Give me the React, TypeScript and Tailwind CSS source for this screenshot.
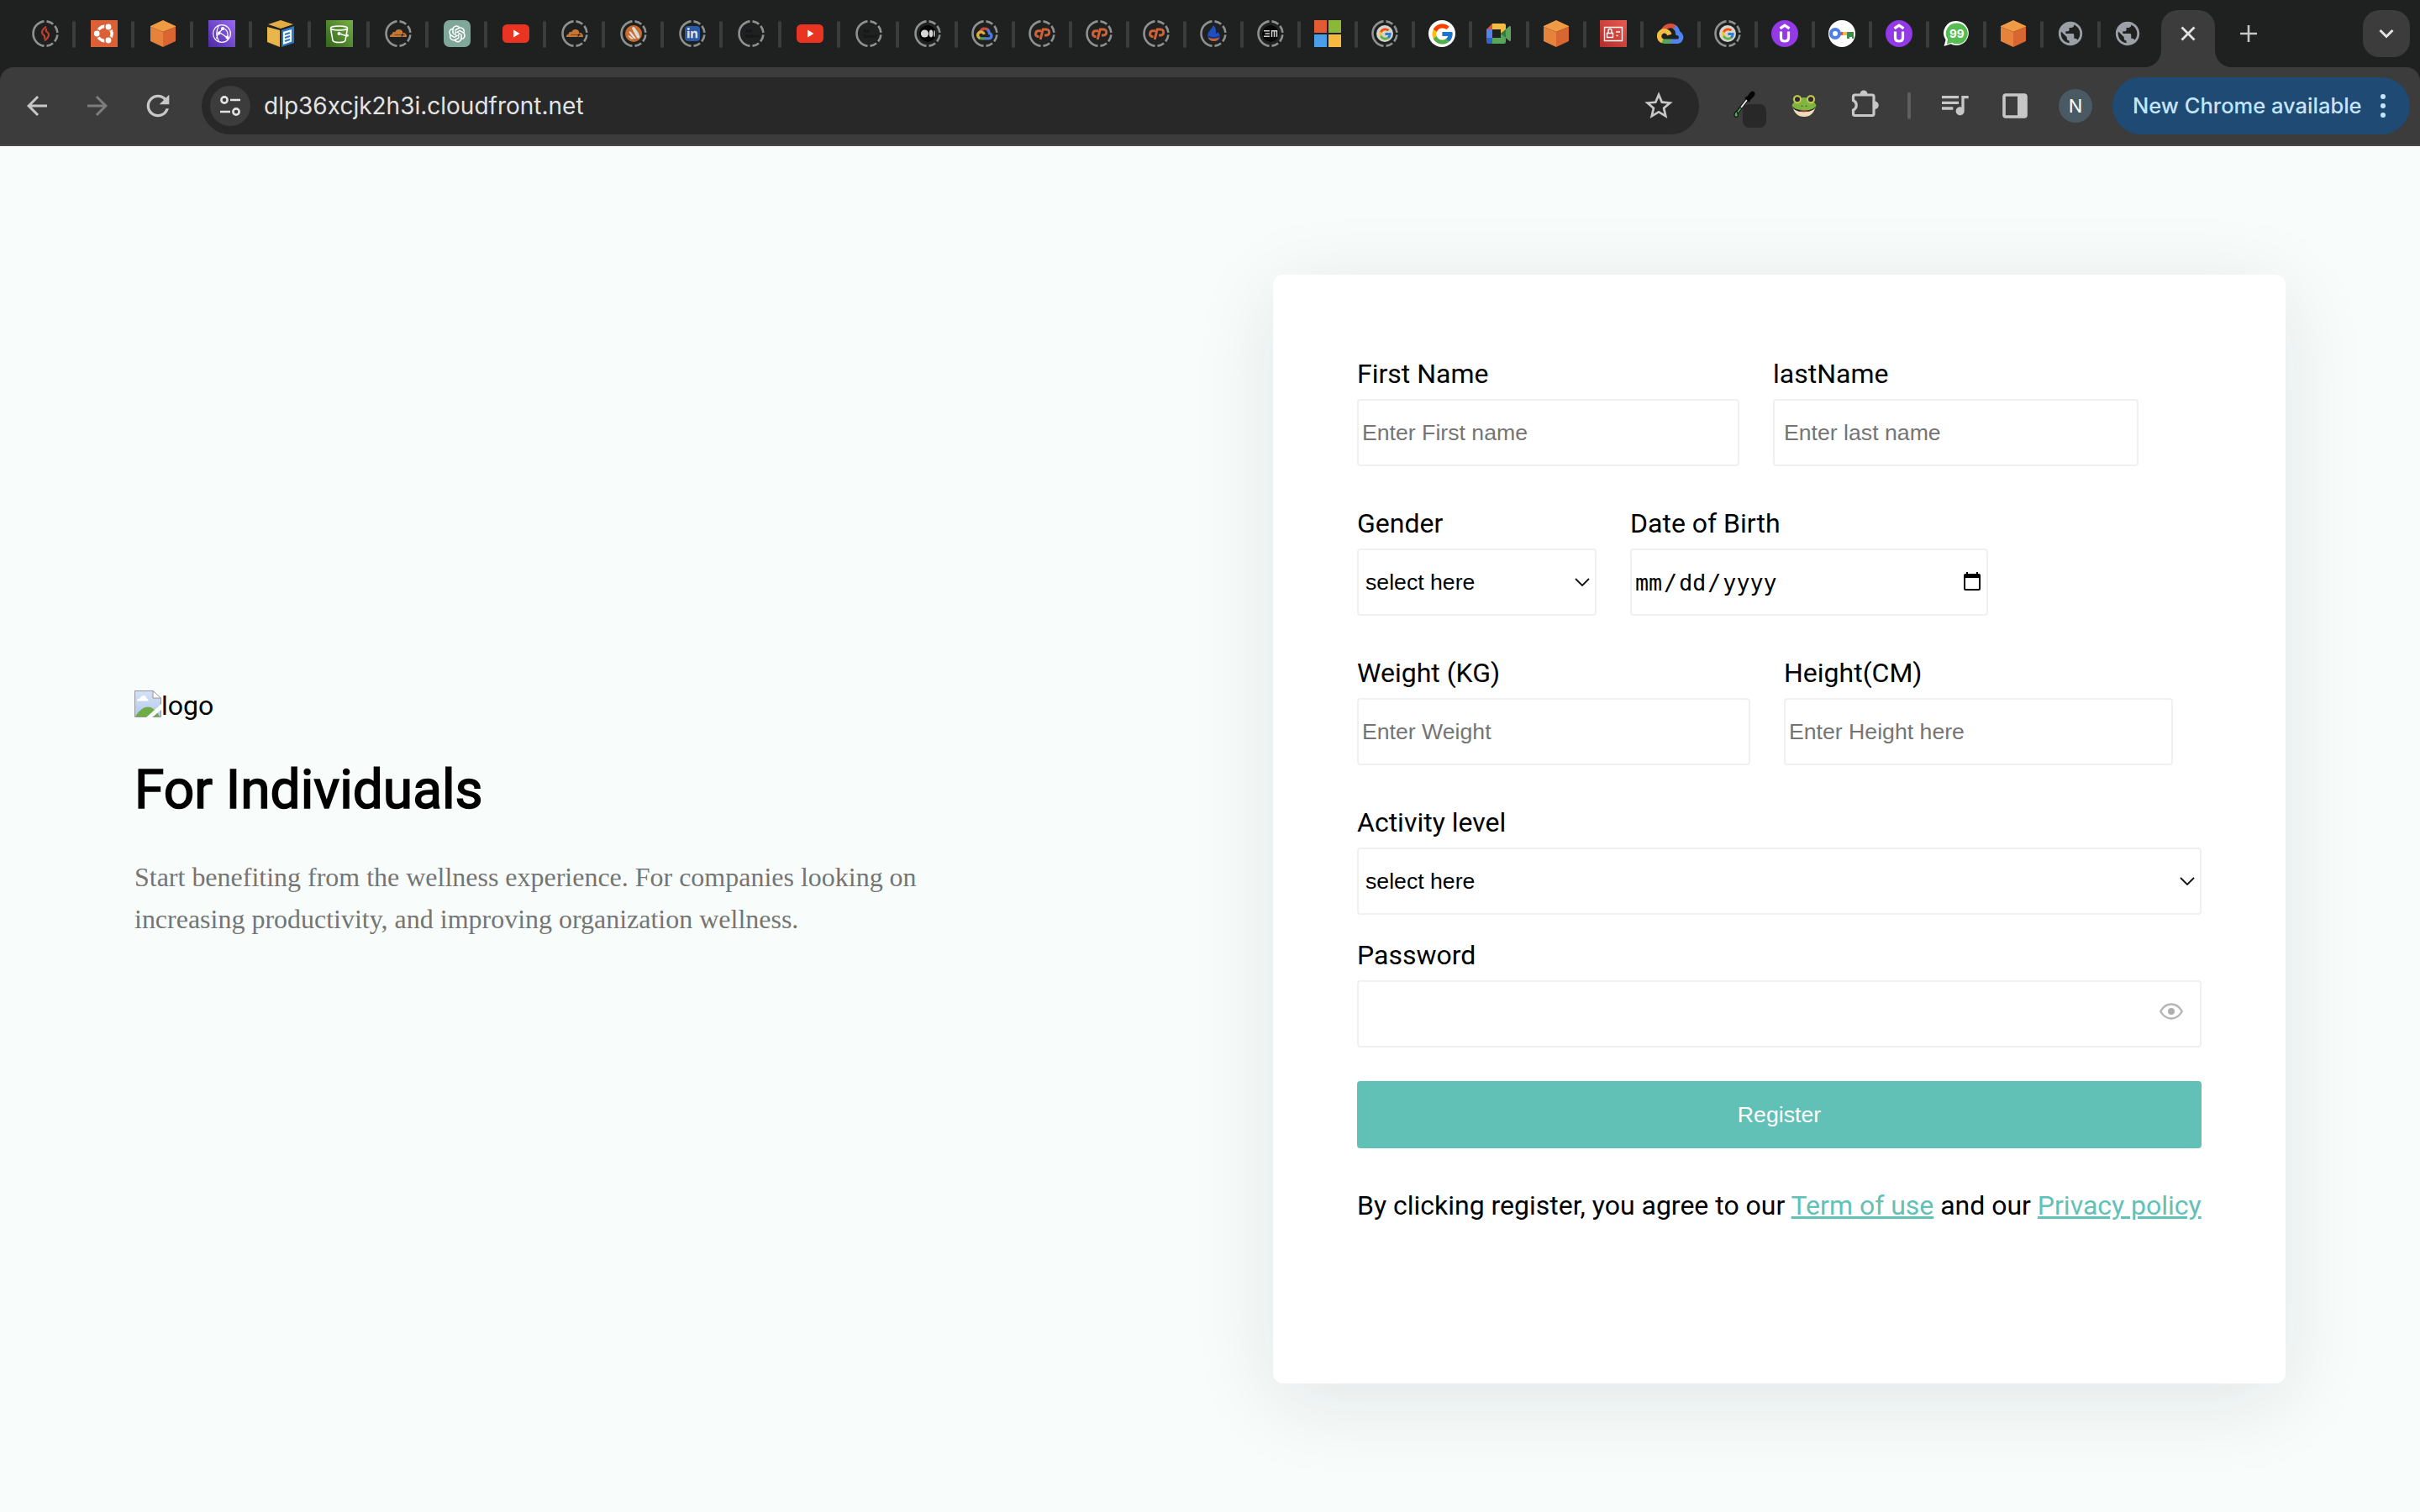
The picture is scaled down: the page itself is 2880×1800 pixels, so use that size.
import type { ReactNode } from "react";
import { MdArrowBack, MdArrowForward, MdRefresh, MdStarBorder, MdQueueMusic, MdPublic } from "react-icons/md";
import { FaCloudflare, FaLinkedinIn } from "react-icons/fa";
import { AiOutlineOpenAI } from "react-icons/ai";
import { FcGoogle } from "react-icons/fc";

/* ---------- favicons ---------- */

function Ring({ children }: { children?: ReactNode }) {
  return (
    <span className="grid size-8 shrink-0 place-items-center">
      <svg viewBox="0 0 32 32" className="col-start-1 row-start-1 size-8" fill="none" stroke="#8e9191" strokeWidth="2.6">
        <path d="M14.5 1.4A14.7 14.7 0 0 0 14.5 30.6" />
        <path d="M17.5 1.4A14.7 14.7 0 0 1 17.5 30.6" strokeDasharray="8.6 2.8" />
      </svg>
      <span className="col-start-1 row-start-1 flex size-5 items-center justify-center">{children}</span>
    </span>
  );
}

const Flare = () => (
  <svg viewBox="0 0 20 20" className="size-5" fill="none" stroke="#c03f30" strokeWidth="2.2">
    <path d="M11 1.500Q6 5.500 6 8.500q0 2 2 3.300t.8 4.700" />
    <path d="M9 18.500Q14 14.500 14 11.500q0-2-2-3.300T11.200 4" />
  </svg>
);

const Ubuntu = () => (
  <svg viewBox="0 0 32 32" className="size-8 bg-[#db6036]">
    <circle cx="16.5" cy="16" r="8.6" fill="none" stroke="#fff" strokeWidth="3.6" />
    <g fill="#fff" stroke="#db6036" strokeWidth="1.6">
      <circle cx="7.2" cy="16" r="4.2" />
      <circle cx="21" cy="8" r="4.2" />
      <circle cx="21" cy="24" r="4.2" />
    </g>
  </svg>
);

const Cube = () => (
  <svg viewBox="0 0 32 32" className="size-8">
    <path d="M16 0 1 7v1l15 6 15-6V7Z" fill="#ee9b43" />
    <path d="M1 8v17l15 7V14Z" fill="#e5823b" />
    <path d="M31 8v17l-15 7V14Z" fill="#d96630" />
  </svg>
);

const Route = () => (
  <svg viewBox="0 0 32 32" className="size-8 bg-linear-to-tr from-[#4c2aa4] to-[#9a68f5]" fill="none" stroke="#fff" strokeWidth="1.2">
    <circle cx="16" cy="16" r="10.4" />
    <path d="M12.500 6.500Q7 16 12.500 25M17 10.500 11.500 16 9.500 22M14 15l8 5.500 1 2.500M18.500 10q5 2 4.500 9" />
    <circle cx="12.500" cy="15.500" r="1.500" fill="#fff" />
    <circle cx="22.500" cy="20.500" r="1.500" fill="#fff" />
    <circle cx="17" cy="10" r="1.500" fill="#fff" />
  </svg>
);

const Box = () => (
  <svg viewBox="0 0 32 32" className="size-8">
    <path d="M16 0 1 5l15 5 15-5Z" fill="#e2ad45" />
    <path d="M0 8v18l15 6V12Z" fill="#e8b64b" />
    <path d="M17 12v20l15-5V7Z" fill="#2f78c4" />
    <path d="M19 14v15l10-3.500V11Z" fill="#fff" />
    <path d="m21 17 6-2M21 21l6-2M21 25l6-2" stroke="#2f78c4" strokeWidth="2" />
  </svg>
);

const Bucket = () => (
  <svg viewBox="0 0 32 32" className="size-8 bg-linear-to-tr from-[#33651c] to-[#77ae45]" fill="none" stroke="#fff" strokeWidth="1.500">
    <ellipse cx="15.500" cy="9.500" rx="10" ry="2.500" />
    <path d="m5.500 10 2.500 14q.5 2.500 7.500 2.500T23 24l2.500-14M16 16l9 3q2 0 .5-2" />
    <circle cx="15.500" cy="16" r="1.200" />
  </svg>
);

const YouTube = () => (
  <svg viewBox="0 0 32 32" className="size-8">
    <rect x="0" y="5" width="32" height="22" rx="5.500" fill="#e93323" />
    <path d="M13 11.500v9l7.500-4.500Z" fill="#fff" />
  </svg>
);

const Rays = () => (
  <svg viewBox="0 0 20 20" className="size-5">
    <circle cx="10" cy="10" r="10" fill="#c96c2d" />
    <path d="M8 3.500q1.500-2.500 3.500-.5 4.500 5.500 6 11-.5 2.500-3 1.500Q11 10 8 3.500ZM4.500 8.500Q5 6.500 7 8l6 7.500q-1 1.200-3 0Q6.500 12 4.500 8.500ZM3.500 13q.3-1.200 1.800-.5L10 16q-1.500 1.200-3.500 0Z" fill="#dcdcdc" />
  </svg>
);

const LinkedIn = () => (
  <span className="flex size-[18px] items-center justify-center rounded-[4px] bg-[#2a5ba8]">
    <FaLinkedinIn className="size-3.5 text-[#dcdcdc]" />
  </span>
);

const School = () => (
  <svg viewBox="0 0 20 20" className="size-5">
    <text x="3" y="9" fontSize="6" fontWeight="700" fontFamily="Liberation Sans, sans-serif" fill="#101111">All</text>
    <text x="3" y="15" fontSize="5" fontWeight="700" fontFamily="Liberation Sans, sans-serif" fill="#101111">School</text>
  </svg>
);

const Medium = () => (
  <svg viewBox="0 0 20 20" className="size-5">
    <circle cx="10" cy="10" r="10" fill="#050505" />
    <g fill="#d6d6d6">
      <circle cx="6.500" cy="10" r="4.600" />
      <ellipse cx="14" cy="10" rx="2.200" ry="4.400" />
      <ellipse cx="18" cy="10" rx=".8" ry="4" />
    </g>
  </svg>
);

function GoogleCloud({ className }: { className: string }) {
  return (
    <svg viewBox="0 0 32 32" className={className} fill="none" strokeWidth="5.400">
      <path d="M7.500 12.500A9 9 0 0 1 22.500 9.500" stroke="#d9503f" />
      <path d="M21 8.300Q24.500 11 24.800 15.500A5 5 0 0 1 24.500 25.300H16" stroke="#5383ec" />
      <path d="M16.500 25.300H9q-2 0-3.500-1" stroke="#58a55c" />
      <path d="M6.500 24.800A6.200 6.200 0 1 1 14.800 17.500" stroke="#f2bd42" />
    </svg>
  );
}

const CPanel = () => (
  <Ring>
    <svg viewBox="0 0 20 20" className="size-5" fill="none" stroke="#cf6136" strokeWidth="3">
      <path d="M9 6.800H6.200a3.400 3.400 0 0 0-1 6.700H6.500" />
      <path d="M8.200 17 11.200 5H15a3.500 3.500 0 0 1 .5 7H13" />
    </svg>
  </Ring>
);

const BlueFlame = () => (
  <svg viewBox="0 0 20 20" className="size-5">
    <path d="M10 0q-1 3-4 6t-3 7q1 6 8 6t7-6q0-3-3-5 0 2-2 2 1-6-3-10Z" fill="#1f4fc0" />
    <path d="M4 14q6 3 13 0-1 5-6.500 5T4 14Z" fill="#c9632c" />
    <path d="M3.500 12.500q7 3 14 0v1.800q-7 3-14 0Z" fill="#12307a" />
  </svg>
);

const Em = () => (
  <svg viewBox="0 0 20 20" className="size-5">
    <circle cx="10" cy="10" r="10" fill="#060606" />
    <path d="M2 6.700h7M3.500 10H9M2 13.300h7M11.500 14V6.700h6V14M14.500 7v7" fill="none" stroke="#d0d0d0" strokeWidth="1.500" />
  </svg>
);

const Windows = () => (
  <span className="grid size-8 grid-cols-2 gap-0.5">
    <i className="bg-[#e25b35]" />
    <i className="bg-[#8bb836]" />
    <i className="bg-[#4a9fe8]" />
    <i className="bg-[#f4b93e]" />
  </span>
);

const Google = () => (
  <span className="flex size-8 items-center justify-center rounded-full bg-white">
    <FcGoogle className="size-[29px]" />
  </span>
);

const RingGoogle = () => (
  <Ring>
    <span className="flex size-5 items-center justify-center rounded-full bg-[#d3d5d5]">
      <FcGoogle className="size-[17px] opacity-90" />
    </span>
  </Ring>
);

const Meet = () => (
  <svg viewBox="0 0 32 32" className="size-8">
    <path d="M1 11 8 4v7Z" fill="#d9503f" />
    <path d="M8 4h14q2 0 2 2v6l-6 4v-5H8Z" fill="#f2bd42" />
    <path d="M1 11h7v10H1Z" fill="#5383ec" />
    <path d="M1 21h7v7H3q-2 0-2-2Z" fill="#3263c6" />
    <path d="M8 21h10v-5l6 4v6q0 2-2 2H8Z" fill="#58a55c" />
    <path d="m18 16 10.500-9q1.500 0 1.500 1v16q0 1-1.500 1Z" fill="#58a55c" />
    <path d="m18 16 6-5v10Z" fill="#387b40" />
  </svg>
);

const IdCard = () => (
  <svg viewBox="0 0 32 32" className="size-8 bg-linear-to-tr from-[#b12b28] to-[#ea5a52]" fill="none" stroke="#fff" strokeWidth="1.400">
    <path d="M5.500 8.500h21v16h-21zM8.500 15.500h7v5h-7zM10 15v-2.500a2 2 0 0 1 4 0V15M19 14h5M19.500 18.500h2" />
  </svg>
);

const Udemy = () => (
  <svg viewBox="0 0 32 32" className="size-8" fill="none" stroke="#fff" strokeWidth="3.200">
    <circle cx="16" cy="16" r="16" fill="#9339e6" stroke="none" />
    <path d="m10.500 9.800 5.500-3.600 5.500 3.600" />
    <path d="M11.500 13.500V21q0 4 4.500 4t4.500-4v-7.500" />
  </svg>
);

const Key = () => (
  <svg viewBox="0 0 32 32" className="size-8">
    <circle cx="16" cy="16" r="16" fill="#fff" />
    <path d="M12 14h5v4h-5z" fill="#d9503f" />
    <path d="M17 14h5v4h-5z" fill="#f2bd42" />
    <path d="M22 14h8v8h-2v-2h-3v2h-3z" fill="#3f8c4a" />
    <circle cx="8" cy="16" r="5" fill="#fff" stroke="#4d7fe8" strokeWidth="4" />
  </svg>
);

const Chat99 = () => (
  <svg viewBox="0 0 32 32" className="size-8">
    <path d="M16.500 1a14.500 14.500 0 1 1-7 27.300L1.500 31l2-7.500A14.500 14.500 0 0 1 16.500 1Z" fill="#fff" />
    <path d="M17 3.500a12.500 12.500 0 1 1-6 23.300L4.800 28.500 6 23A12.500 12.500 0 0 1 17 3.500Z" fill="#57bd52" />
    <text x="16.800" y="21" textAnchor="middle" fontSize="13.500" fontWeight="700" fontFamily="Inter, sans-serif" fill="#fff">99</text>
  </svg>
);

const Globe = () => (
  <span className="-mx-px flex size-[34px] shrink-0 items-center justify-center">
    <MdPublic className="size-[34px] shrink-0 text-[#9aa0a6]" />
  </span>
);

const Cloudflare = () => (
  <Ring>
    <FaCloudflare className="size-5 text-[#c87634]" />
  </Ring>
);

const OpenAI = () => (
  <span className="flex size-8 items-center justify-center rounded-[7px] bg-[#7fa89b]">
    <AiOutlineOpenAI className="size-[26px] text-white" />
  </span>
);

const wideTabs: ReactNode[] = [
  <Ring><Flare /></Ring>, <Ubuntu />, <Cube />, <Route />, <Box />, <Bucket />, <Cloudflare />, <OpenAI />,
  <YouTube />, <Cloudflare />, <Ring><Rays /></Ring>, <Ring><LinkedIn /></Ring>, <Ring><School /></Ring>,
  <YouTube />, <Ring><School /></Ring>,
];
const narrowTabs: ReactNode[] = [
  <Ring><Medium /></Ring>, <Ring><GoogleCloud className="size-5 opacity-90" /></Ring>, <CPanel />, <CPanel />, <CPanel />,
  <Ring><BlueFlame /></Ring>, <Ring><Em /></Ring>, <Windows />, <RingGoogle />, <Google />, <Meet />, <Cube />,
  <IdCard />, <GoogleCloud className="size-8" />, <RingGoogle />, <Udemy />, <Key />, <Udemy />, <Chat99 />, <Cube />, <Globe />,
];

function Tab({ wide, children }: { wide?: boolean; children: ReactNode }) {
  return (
    <div className={wide ? "flex w-[70px] shrink-0 items-center gap-4" : "flex w-[68px] shrink-0 items-center gap-4"}>
      <span className="flex size-8 shrink-0 items-center justify-center">{children}</span>
      <span className="mt-0.5 h-8 w-1 shrink-0 rounded-full bg-[#3c3c3c]" />
    </div>
  );
}

function TabStrip() {
  return (
    <div className="flex h-20 items-stretch pl-[38px] pr-3">
      {wideTabs.map((icon, i) => <Tab key={i} wide>{icon}</Tab>)}
      {narrowTabs.map((icon, i) => <Tab key={i}>{icon}</Tab>)}
      <div className="flex w-9 shrink-0 items-center"><Globe /></div>
      <svg viewBox="0 0 20 20" className="size-5 shrink-0 self-end"><path d="M20 0v20H0A20 20 0 0 0 20 0Z" fill="#3c3c3c" /></svg>
      <div className="mt-3 flex w-16 shrink-0 justify-center rounded-t-[20px] bg-[#3c3c3c] pt-[19px]">
        <svg viewBox="0 0 18 18" className="size-[18px]" stroke="#e3e3e3" strokeWidth="2.800"><path d="m1.500 1.500 15 15M16.500 1.500l-15 15" /></svg>
      </div>
      <svg viewBox="0 0 20 20" className="size-5 shrink-0 self-end"><path d="M0 0v20h20A20 20 0 0 1 0 0Z" fill="#3c3c3c" /></svg>
      <svg viewBox="0 0 20 20" className="ml-2.5 size-5 shrink-0 self-center" stroke="#c7c7c7" strokeWidth="2.600"><path d="M10 0v20M0 10h20" /></svg>
      <div className="ml-auto mt-3 flex size-14 items-center justify-center rounded-[20px] bg-[#3c3c3c]">
        <svg viewBox="0 0 18 12" className="h-3 w-[18px]" fill="none" stroke="#e3e3e3" strokeWidth="3"><path d="m1.500 2 7.500 7.500L16.500 2" /></svg>
      </div>
    </div>
  );
}

/* ---------- toolbar ---------- */

const Dropper = () => (
  <svg viewBox="0 0 40 44" className="h-11 w-10 shrink-0">
    <path d="M3.500 27 16 11" stroke="#111" strokeWidth="4" />
    <path d="M9 20 16 11" stroke="#e8e8e8" strokeWidth="2" />
    <path d="m4.500 26 4-5" stroke="#4fae5c" strokeWidth="1.800" />
    <path d="M2.500 25q-2.500 4-1 5.500t3.500 0q1-2-1-5.500Z" fill="#4fae5c" stroke="#111" strokeWidth="1.200" />
    <path d="m13 8 3-1 4-5q3-3 5 0 1.500 2-1 5l-4 4-1 3Z" fill="#050505" />
    <rect x="11" y="16" width="28" height="28" rx="8" fill="#282828" />
  </svg>
);

const Frog = () => (
  <svg viewBox="0 0 30 28" className="ml-[29px] h-7 w-[30px] shrink-0">
    <path d="M1 14Q4 27 15 27T29 14Z" fill="#f0dcb8" />
    <path d="M15 4Q20 4 22 6 28 9 29.500 14 28 20 15 20T.5 14Q2 9 8 6 10 4 15 4Z" fill="#7fb440" />
    <path d="M.5 13.500Q3 19 15 19.300T29.500 13.500Q28 21 15 21.200T.5 13.500Z" fill="#2b2a26" />
    <path d="M9 20q6-1.500 12 0-6 1.500-12 0Z" fill="#e0513c" />
    <circle cx="7" cy="6.300" r="5.200" fill="#9ccb4c" />
    <circle cx="23" cy="6.300" r="5.200" fill="#9ccb4c" />
    <circle cx="7" cy="6.300" r="3.600" fill="#2a2a38" stroke="#e8c84a" strokeWidth="1.200" />
    <circle cx="23" cy="6.300" r="3.600" fill="#2a2a38" stroke="#e8c84a" strokeWidth="1.200" />
    <path d="M12.500 13.500v1.500M17.500 13.500v1.500" stroke="#3e6320" strokeWidth="1.400" />
  </svg>
);

function Toolbar() {
  return (
    <div className="flex h-[94px] items-center rounded-t-[16px] border-b-2 border-[#4b4648] bg-[#3c3c3c] pl-2 pr-3 text-[#c7c7c7]">
      <span className="flex w-[72px] justify-center"><MdArrowBack className="size-9" /></span>
      <span className="flex w-[72px] justify-center"><MdArrowForward className="size-9 text-[#7d7d7d]" /></span>
      <span className="flex w-[72px] justify-center"><MdRefresh className="size-10" /></span>
      <div className="ml-4 flex h-[68px] w-[1782px] shrink-0 items-center rounded-full bg-[#282828] pl-2.5 pr-7">
        <span className="flex size-12 items-center justify-center rounded-full bg-[#3c3c3c]">
          <svg viewBox="0 0 24 24" className="size-6" fill="none" stroke="#e3e3e3" strokeWidth="2.600">
            <circle cx="5" cy="5" r="3.600" />
            <path d="M12 5h12M0 19h12" />
            <circle cx="19" cy="19" r="3.600" />
          </svg>
        </span>
        <span className="ml-4 font-['Inter',sans-serif] text-[28px] leading-none text-[#e3e3e3]">dlp36xcjk2h3i.cloudfront.net</span>
        <MdStarBorder className="ml-auto size-10" />
      </div>
      <div className="ml-[41px] mt-2"><Dropper /></div>
      <Frog />
      <svg viewBox="0 0 36 36" className="ml-[40px] mt-[-4px] size-9 shrink-0">
        <path d="M5.500 7H26q2 0 2 2v20.500q0 2-2 2H5.500q-2 0-2-2V25a6.300 6.300 0 0 0 0-11.500V9q0-2 2-2Z" fill="none" stroke="#c7c7c7" strokeWidth="3.200" />
        <path d="M11.500 6a4.500 4.500 0 0 1 9 0ZM29 14.500a4.800 4.800 0 0 1 0 9.600Z" fill="#c7c7c7" />
      </svg>
      <span className="ml-8 h-8 w-1 shrink-0 rounded-full bg-[#606060]" />
      <MdQueueMusic className="ml-8 mt-[-4px] size-10 shrink-0" />
      <svg viewBox="0 0 30 30" className="ml-[37px] size-[30px] shrink-0">
        <rect x="2" y="2" width="26" height="26" rx="2" fill="none" stroke="#c7c7c7" strokeWidth="3.600" />
        <path d="M18 2h10v26H18z" fill="#c7c7c7" />
      </svg>
      <span className="ml-[37px] flex size-10 shrink-0 items-center justify-center rounded-full bg-[#4a5a64] font-['Inter',sans-serif] text-[22px] text-white">N</span>
      <div className="ml-auto flex h-[68px] w-[354px] shrink-0 items-center whitespace-nowrap rounded-full bg-[#1f4a73] pl-6 font-['Inter',sans-serif] text-[25.5px] font-medium text-[#c6e5fb]">
        New Chrome available
        <svg viewBox="0 0 8 28" className="ml-auto mr-7 h-7 w-2" fill="#c6e5fb">
          <circle cx="4" cy="3" r="3" />
          <circle cx="4" cy="14" r="3" />
          <circle cx="4" cy="25" r="3" />
        </svg>
      </div>
    </div>
  );
}

/* ---------- page ---------- */

const BrokenImage = () => (
  <svg viewBox="0 0 32 32" className="size-8">
    <defs>
      <linearGradient id="sky" x1="0" y1="0" x2="0" y2="1">
        <stop offset="0" stopColor="#d4e2f8" />
        <stop offset="1" stopColor="#b4c8ec" />
      </linearGradient>
    </defs>
    <path d="M.5.500H22L31.500 9.500v22H.5Z" fill="url(#sky)" stroke="#979797" />
    <path d="M22 .500V9h9.500Z" fill="#fff" stroke="#979797" />
    <path d="M3 12.500q0-3 3.500-3 1.500-3.500 4.500-3.500t3.500 3.500q2.500.5 2 3Z" fill="#fff" />
    <path d="M1 31Q8 19.500 16 19.500T30 31Z" fill="#6fab46" />
    <path d="M14 32 32 16v7L21 32Z" fill="#f8fdfb" />
  </svg>
);

const Eye = () => (
  <svg viewBox="0 0 28 20" className="h-5 w-7" fill="none" stroke="#b6b6b6">
    <path d="M1.200 10Q6 1.500 14 1.500T26.800 10Q22 18.500 14 18.500T1.200 10Z" strokeWidth="2.400" />
    <circle cx="14" cy="10" r="4" fill="#b0b0b0" stroke="none" />
  </svg>
);

const fieldBox = "h-20 rounded-[4px] border-2 border-[#f0f0f0] bg-white font-['Liberation_Sans',Arial,sans-serif] text-[26.667px]";

function Field({ label, className, children }: { label: string; className?: string; children: ReactNode }) {
  return (
    <label className={`flex flex-col gap-2.5 ${className ?? ""}`}>
      <span className="h-[38px] leading-[37px]">{label}</span>
      {children}
    </label>
  );
}

function SelectBox() {
  return (
    <div className={`${fieldBox} flex items-center justify-between pl-2 pr-1.5`}>
      select here
      <svg viewBox="0 0 18 10" className="h-2.5 w-[18px]" fill="none" stroke="#111" strokeWidth="1.800"><path d="m1 1 8 8 8-8" /></svg>
    </div>
  );
}

function RegisterCard() {
  return (
    <form className="mt-[153px] flex h-[1320px] w-[1205px] flex-col rounded-[12px] bg-white p-[100px] font-['Roboto',sans-serif] text-[32px] shadow-[0_20px_100px_rgba(20,22,45,0.1)]">
      <div className="flex gap-10">
        <Field label="First Name" className="w-[455px]">
          <input className={`${fieldBox} pl-1 placeholder:text-[#757575]`} placeholder="Enter First name" />
        </Field>
        <Field label="lastName" className="w-[435px]">
          <input className={`${fieldBox} pl-[11px] placeholder:text-[#757575]`} placeholder="Enter last name" />
        </Field>
      </div>
      <div className="mt-[50px] flex gap-10">
        <Field label="Gender" className="w-[285px]"><SelectBox /></Field>
        <Field label="Date of Birth" className="w-[426px]">
          <div className={`${fieldBox} flex items-center justify-between pl-1 pr-[7px]`}>
            <span className="mt-0.5 font-['DejaVu_Sans_Mono',monospace]">
              mm<span className="mx-0.5">/</span>dd<span className="mx-0.5">/</span>yyyy
            </span>
            <svg viewBox="0 0 20 22" className="mb-0.5 h-[22px] w-5">
              <path d="M3 0h2v2h10V0h2v2h1q2 0 2 2v16q0 2-2 2H2q-2 0-2-2V4q0-2 2-2h1ZM2 7v13h16V7Z" fill="#000" fillRule="evenodd" />
            </svg>
          </div>
        </Field>
      </div>
      <div className="mt-[50px] flex gap-10">
        <Field label="Weight (KG)" className="w-[468px]">
          <input className={`${fieldBox} pl-1 placeholder:text-[#757575]`} placeholder="Enter Weight" />
        </Field>
        <Field label="Height(CM)" className="w-[463px]">
          <input className={`${fieldBox} pl-1 placeholder:text-[#757575]`} placeholder="Enter Height here" />
        </Field>
      </div>
      <Field label="Activity level" className="mt-[50px]"><SelectBox /></Field>
      <Field label="Password" className="mt-[30px]">
        <div className={`${fieldBox} flex items-center justify-end pb-1.5 pr-5`}>
          <Eye />
        </div>
      </Field>
      <button type="button" className="mt-10 h-20 shrink-0 rounded-[4px] bg-[#62c1b6] font-['Liberation_Sans',Arial,sans-serif] text-[26.667px] text-white">
        Register
      </button>
      <p className="mt-[50px] whitespace-nowrap leading-[37px] tracking-[-0.01px]">
        By clicking register, you agree to our <a className="text-[#62c1b6] underline">Term of use</a> and our <a className="text-[#62c1b6] underline">Privacy policy</a>
      </p>
    </form>
  );
}

export default function App() {
  return (
    <div className="flex h-[1800px] w-[2880px] flex-col overflow-hidden bg-[#1f2120] text-black">
      <TabStrip />
      <Toolbar />
      <main className="flex flex-1 items-start justify-between bg-[#f8fdfb] pl-40 pr-40">
        <section className="mt-[648px] w-[960px] font-['Roboto',sans-serif]">
          <div className="flex h-[38px] items-start text-[32px] leading-[37px]">
            <BrokenImage />
            logo
          </div>
          <h1 className="mt-[43px] h-[75px] text-[64px] leading-[75px] [-webkit-text-stroke:1.6px_black]">For Individuals</h1>
          <p className="mt-[42px] font-['Liberation_Serif','Times_New_Roman',serif] text-[32px] leading-[49.6px] tracking-[-0.01px] text-[#757575]">
            Start benefiting from the wellness experience. For companies looking on
            <br />
            increasing productivity, and improving organization wellness.
          </p>
        </section>
        <RegisterCard />
      </main>
    </div>
  );
}
